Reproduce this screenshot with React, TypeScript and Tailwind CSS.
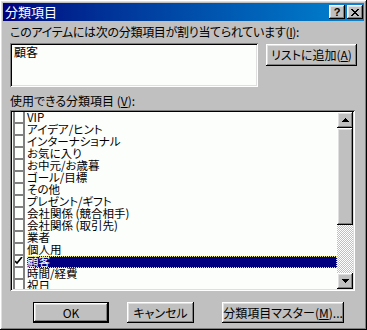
import React from "react";

const raised =
  "shadow-[inset_-1px_-1px_#000,inset_1px_1px_#fff,inset_-2px_-2px_#808080,inset_2px_2px_#dfdfdf]";
const sunken =
  "shadow-[inset_1px_1px_#808080,inset_-1px_-1px_#fff,inset_2px_2px_#000,inset_-2px_-2px_#dfdfdf]";

const items = [
  "VIP",
  "アイデア/ヒント",
  "インターナショナル",
  "お気に入り",
  "お中元/お歳暮",
  "ゴール/目標",
  "その他",
  "プレゼント/ギフト",
  "会社関係 (競合相手)",
  "会社関係 (取引先)",
  "業者",
  "個人用",
  "顧客",
  "時間/経費",
  "祝日",
];

function U({ children }: { children: React.ReactNode }) {
  return <span className="underline underline-offset-[1px]">{children}</span>;
}

export default function App() {
  return (
    <div
      className={`w-[367px] h-[330px] bg-[#c0c0c0] ${raised} p-[3px] flex flex-col text-black text-[12px] leading-[12px] [font-feature-settings:'palt'] overflow-hidden`}
      style={{ fontFamily: '"Noto Sans CJK JP", "Noto Sans", sans-serif' }}
    >
      {/* Title bar */}
      <div className="h-[18px] bg-linear-to-r from-[#000080] to-[#1084d0] flex items-center pl-[2px] pr-[1px] shrink-0">
        <span className="text-white text-[13px] leading-[14px] flex-1">分類項目</span>
        <div
          className={`w-[16px] h-[14px] bg-[#c0c0c0] ${raised} flex items-center justify-center text-[11px] font-bold leading-none`}
          style={{ fontFamily: '"Liberation Sans", sans-serif' }}
        >
          ?
        </div>
        <div className={`ml-[2px] w-[16px] h-[14px] bg-[#c0c0c0] ${raised} flex items-center justify-center`}>
          <svg width="8" height="7" viewBox="0 0 8 7">
            <path d="M0 0h2v1h1v1h2v-1h1v-1h2v1h-1v1h-1v1h-1v1h1v1h1v1h1v1h-2v-1h-1v-1h-2v1h-1v1h-2v-1h1v-1h1v-1h1v-1h-1v-1h-1v-1h-1z" fill="#000" />
          </svg>
        </div>
      </div>

      {/* Body */}
      <div className="pl-[7px] flex flex-col">
        <div className="mt-[5px] h-[12px] whitespace-nowrap tracking-[-0.3px]">
          このアイテムには次の分類項目が割り当てられています(<U>I</U>):
        </div>
        <div className="mt-[5px] flex">
          <div className={`w-[248px] h-[44px] bg-[#fcfefc] ${sunken} px-[4px] pt-[3px]`}>
            <div className="h-[12px]">顧客</div>
          </div>
          <div className={`ml-[8px] mt-[1px] w-[91px] h-[22px] ${raised} flex items-center justify-center`}>
            リストに追加(<U>A</U>)
          </div>
        </div>
        <div className="mt-[8px] h-[12px] whitespace-nowrap">
          使用できる分類項目 (<U>V</U>):
        </div>
        <div className={`mt-[3px] w-[345px] h-[181px] bg-[#fcfefc] ${sunken} p-[2px] flex overflow-hidden`}>
          <div className="flex-1 flex flex-col overflow-hidden">
            {items.map((it) => {
              const sel = it === "顧客";
              return (
                <div key={it} className="h-[12px] shrink-0 flex items-stretch">
                  <div className="ml-[1px] w-[12px] h-[12px] border-l-2 border-r-2 border-b-2 border-[#808080] bg-[#fcfefc] flex items-center justify-center shrink-0">
                    {sel && (
                      <svg width="8" height="8" viewBox="0 0 8 8">
                        <path d="M0 4l2 2 5-6" stroke="#000" strokeWidth="1.6" fill="none" />
                      </svg>
                    )}
                  </div>
                  <div
                    className={`ml-[2px] flex-1 h-[12px] text-[11.5px] leading-[11px] whitespace-nowrap ${
                      sel
                        ? "bg-[#000080] text-white outline outline-1 outline-dotted outline-[#f0f080] -outline-offset-1"
                        : ""
                    }`}
                  >
                    {it}
                  </div>
                </div>
              );
            })}
          </div>
          {/* Scrollbar */}
          <div className="w-[16px] flex flex-col shrink-0">
            <div className={`h-[16px] bg-[#c0c0c0] ${raised} flex items-center justify-center`}>
              <svg width="7" height="4" viewBox="0 0 7 4">
                <path d="M3 0h1v1h1v1h1v1h1v1h-7v-1h1v-1h1v-1h1z" fill="#000" />
              </svg>
            </div>
            <div className={`h-[97px] bg-[#c0c0c0] ${raised}`} />
            <div className="flex-1 bg-[repeating-conic-gradient(#c0c0c0_0_25%,#fff_0_50%)] bg-size-[2px_2px]" />
            <div className={`h-[16px] bg-[#c0c0c0] ${raised} flex items-center justify-center`}>
              <svg width="7" height="4" viewBox="0 0 7 4">
                <path d="M0 0h7v1h-1v1h-1v1h-1v1h-1v-1h-1v-1h-1v-1h-1z" fill="#000" />
              </svg>
            </div>
          </div>
        </div>
        <div className="mt-[11px] flex">
          <div className="ml-[23px] w-[76px] h-[21px] border border-black">
            <div className={`w-full h-full ${raised} flex items-center justify-center`}>OK</div>
          </div>
          <div className={`ml-[18px] w-[67px] h-[21px] ${raised} flex items-center justify-center`}>
            キャンセル
          </div>
          <div className={`ml-[28px] w-[122px] h-[21px] ${raised} flex items-center justify-center whitespace-nowrap`}>
            分類項目マスター(<U>M</U>)...
          </div>
        </div>
      </div>
    </div>
  );
}
